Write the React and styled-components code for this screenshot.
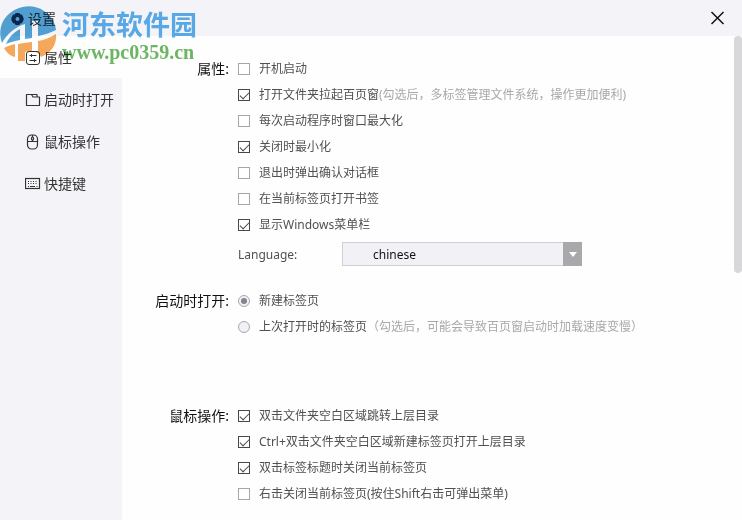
import React, { useState } from "react";
import styled, { createGlobalStyle } from "styled-components";

const GlobalStyle = createGlobalStyle`
  * {
    box-sizing: border-box;
  }
  body {
    margin: 0;
    overflow: hidden;
    background: #fefefe;
    font-family: "Noto Sans", "Noto Sans CJK SC", sans-serif;
    font-size: 12px;
    color: #505050;
  }
`;

const Window = styled.div`
  display: flex;
  flex-direction: column;
  height: 100vh;
`;

const TitleBar = styled.header`
  display: flex;
  flex: none;
  align-items: center;
  justify-content: space-between;
  height: 36px;
  padding: 0 16px 0 11px;
  background: #f4f3f7;
`;

const Title = styled.h1`
  display: flex;
  align-items: center;
  gap: 4px;
  margin: 0;
  padding-top: 2px;
  font-size: 14px;
  font-weight: 400;
  line-height: 20px;
  color: #333;
`;

const CloseButton = styled.button`
  display: flex;
  padding: 0;
  border: none;
  background: none;
  color: #111;
  cursor: pointer;
`;

const Body = styled.div`
  display: flex;
  flex: 1;
  min-height: 0;
`;

const Sidebar = styled.nav`
  flex: none;
  width: 122px;
  background: #f4f3f7;
`;

const NavItem = styled.button`
  display: flex;
  align-items: center;
  gap: 3px;
  width: 100%;
  height: 42px;
  padding: 2px 0 0 25px;
  border: none;
  background: ${(props) => (props.$active ? "#fefefe" : "transparent")};
  color: #333;
  font-family: inherit;
  font-size: 14px;
  line-height: 20px;
  white-space: nowrap;
  cursor: pointer;
`;

const Content = styled.main`
  display: flex;
  flex: 1;
  flex-direction: column;
  min-width: 0;
  padding-top: 20px;
  overflow: hidden;
`;

const Section = styled.section`
  display: grid;
  grid-template-columns: 107px 1fr;
  column-gap: 9px;
  flex: none;
  margin-bottom: ${(props) => props.$space || 0}px;
`;

const SectionTitle = styled.h2`
  margin: 0;
  font-size: 14px;
  font-weight: 400;
  line-height: 26px;
  text-align: right;
  color: #111;
`;

const Option = styled.label`
  display: flex;
  align-items: center;
  gap: 9px;
  height: 26px;
  line-height: 26px;
  white-space: nowrap;
`;

const Hint = styled.span`
  color: #a8a8a8;
`;

const Checkbox = styled.input.attrs({ type: "checkbox" })`
  appearance: none;
  display: grid;
  flex: none;
  place-items: center;
  width: 12px;
  height: 12px;
  margin: 0;
  border: 1px solid #a6a6a6;
  background: #fff;

  &:checked {
    border-color: #484848;
  }
  &:checked::before {
    content: "";
    width: 8px;
    height: 4px;
    margin-bottom: 2px;
    border: solid #484848;
    border-width: 0 0 1px 1px;
    transform: rotate(-45deg);
  }
`;

const Radio = styled.input.attrs({ type: "radio" })`
  appearance: none;
  display: grid;
  flex: none;
  place-items: center;
  width: 12px;
  height: 12px;
  margin: 0;
  border: 1px solid #a9a8ae;
  border-radius: 50%;
  background: #f1f0f6;

  &:checked::before {
    content: "";
    width: 6px;
    height: 6px;
    border-radius: 50%;
    background: #85848a;
  }
`;

const LanguageRow = styled.div`
  display: flex;
  align-items: center;
  margin-top: 4px;
`;

const LanguageLabel = styled.label`
  width: 104px;
`;

const SelectBox = styled.div`
  display: flex;
  position: relative;
  width: 240px;
  height: 24px;
`;

const Select = styled.select`
  appearance: none;
  flex: 1;
  padding: 0 30px;
  border: 1px solid #cfced2;
  border-radius: 0;
  background: #f2f1f5;
  color: #111;
  font-family: inherit;
  font-size: 12px;
`;

const SelectArrow = styled.span`
  display: grid;
  position: absolute;
  top: 0;
  right: 0;
  bottom: 0;
  place-items: center;
  width: 19px;
  background: #a9a8ab;
  pointer-events: none;
`;

const ScrollTrack = styled.div`
  flex: none;
  width: 8px;
`;

const ScrollThumb = styled.div`
  height: 49%;
  border-radius: 4px;
  background: #d8d7da;
`;

const Watermark = styled.div`
  display: flex;
  position: absolute;
  top: 6px;
  left: 0;
  gap: 4px;
  mix-blend-mode: multiply;
  pointer-events: none;
`;

const WatermarkText = styled.div`
  display: flex;
  flex-direction: column;
  padding-top: 4px;
  white-space: nowrap;
`;

const SiteName = styled.span`
  font-size: 27px;
  font-weight: 700;
  line-height: 30px;
  color: #5cb0ee;
`;

const SiteUrl = styled.span`
  font-family: "Liberation Serif", serif;
  font-size: 20px;
  font-weight: 700;
  line-height: 24px;
  color: #6bb763;
`;

const GearIcon = () => (
  <svg width="13" height="14" viewBox="0 0 13 14">
    <path
      fill="#1b3a5c"
      fillRule="evenodd"
      d="M4.600 1h3.800l.8 1.500 1.700.1L12.600 6v2l-1.700 3.300-1.700.1-.8 1.600H4.600l-.8-1.600-1.700-.1L.4 8V6l1.700-3.400 1.700-.1zM6.500 5a2 2 0 1 0 0 4 2 2 0 0 0 0-4z"
    />
  </svg>
);

const CloseIcon = () => (
  <svg width="17" height="17" viewBox="0 0 17 17">
    <path d="M2.500 2l12 12M14.500 2l-12 12" stroke="currentColor" strokeWidth="1.500" />
  </svg>
);

const PropertyIcon = () => (
  <svg width="16" height="16" viewBox="0 0 16 16" fill="none" stroke="currentColor">
    <rect x="1.500" y="1.500" width="13" height="13" rx="2.500" />
    <path d="M4.500 5.500h7M6.500 4v3M4.500 10.500h7M9.500 9v3" />
  </svg>
);

const FolderIcon = () => (
  <svg width="16" height="16" viewBox="0 0 16 16" fill="none" stroke="currentColor" strokeWidth="1.200">
    <path
      d="M1.500 13.500v-11h5l1.500 2.500h6.500v8.500zM6.500 2.500h5.500v2.500"
      strokeLinejoin="round"
    />
  </svg>
);

const MouseIcon = () => (
  <svg width="16" height="16" viewBox="0 0 16 16" fill="none" stroke="currentColor" strokeWidth="1.200">
    <rect x="2.500" y="1" width="10" height="14" rx="4" />
    <path d="M2.500 7.500h10M7.500 1v2M7.500 6v1.500" />
    <rect x="6.500" y="3" width="2" height="3" rx="1" />
  </svg>
);

const KeyboardIcon = () => (
  <svg width="16" height="16" viewBox="0 0 16 16" fill="none" stroke="currentColor">
    <rect x="0.500" y="2.500" width="14" height="10" strokeWidth="1.200" />
    <path d="M3 5.500h10M3 7.500h10" strokeDasharray="1 1.500" />
    <path d="M3 10.500h1M5 10.500h5M11.500 10.500h1" />
  </svg>
);

const SiteLogo = () => (
  <svg width="58" height="58" viewBox="0 0 58 58">
    <path
      fill="#55a6d8"
      d="M2 37C-2 26 1 14 10 7 20-1 34-2 44 5c7 5 11 11 12 19-6 3-12 5-18 6V15h-6v17l-7 1V18C15 21 7 28 2 37z"
    />
    <path fill="#55a6d8" d="M6 38c3-7 8-12 14-15v11c-5 1-10 2-14 4z" />
    <path fill="#f6a85c" d="M4 42c3-2 7-3 11-4v13C10 50 6 46 4 42z" />
    <path fill="#f6a85c" d="M24 37l8-1v10h6V35c7-1 13-4 18-7 1 11-5 19-15 23-3-6-9-7-16-5v9h-7V38z" />
  </svg>
);

const navItems = [
  { id: "property", text: "属性", Icon: PropertyIcon },
  { id: "startup", text: "启动时打开", Icon: FolderIcon },
  { id: "mouse", text: "鼠标操作", Icon: MouseIcon },
  { id: "shortcut", text: "快捷键", Icon: KeyboardIcon },
];

const propertyOptions = [
  { text: "开机启动", checked: false },
  {
    text: "打开文件夹拉起百页窗",
    hint: "(勾选后，多标签管理文件系统，操作更加便利)",
    checked: true,
  },
  { text: "每次启动程序时窗口最大化", checked: false },
  { text: "关闭时最小化", checked: true },
  { text: "退出时弹出确认对话框", checked: false },
  { text: "在当前标签页打开书签", checked: false },
  { text: "显示Windows菜单栏", checked: true },
];

const mouseOptions = [
  { text: "双击文件夹空白区域跳转上层目录", checked: true },
  { text: "Ctrl+双击文件夹空白区域新建标签页打开上层目录", checked: true },
  { text: "双击标签标题时关闭当前标签页", checked: true },
  { text: "右击关闭当前标签页(按住Shift右击可弹出菜单)", checked: false },
];

function CheckList({ options }) {
  return options.map((option) => (
    <Option key={option.text}>
      <Checkbox defaultChecked={option.checked} />
      <span>
        {option.text}
        {option.hint && <Hint>{option.hint}</Hint>}
      </span>
    </Option>
  ));
}

function App() {
  const [active, setActive] = useState("property");
  const [startup, setStartup] = useState("new");

  return (
    <>
      <GlobalStyle />
      <Window>
        <TitleBar>
          <Title>
            <GearIcon />
            设置
          </Title>
          <CloseButton aria-label="关闭">
            <CloseIcon />
          </CloseButton>
        </TitleBar>
        <Body>
          <Sidebar>
            {navItems.map(({ id, text, Icon }) => (
              <NavItem key={id} $active={active === id} onClick={() => setActive(id)}>
                <Icon />
                {text}
              </NavItem>
            ))}
          </Sidebar>
          <Content>
            <Section $space={22}>
              <SectionTitle>属性:</SectionTitle>
              <div>
                <CheckList options={propertyOptions} />
                <LanguageRow>
                  <LanguageLabel htmlFor="language">Language:</LanguageLabel>
                  <SelectBox>
                    <Select id="language" defaultValue="chinese">
                      <option value="chinese">chinese</option>
                      <option value="english">english</option>
                    </Select>
                    <SelectArrow>
                      <svg width="8" height="5" viewBox="0 0 8 5">
                        <path d="M0 0h8L4 5z" fill="#fff" />
                      </svg>
                    </SelectArrow>
                  </SelectBox>
                </LanguageRow>
              </div>
            </Section>
            <Section $space={63}>
              <SectionTitle>启动时打开:</SectionTitle>
              <div>
                <Option>
                  <Radio
                    name="startup"
                    checked={startup === "new"}
                    onChange={() => setStartup("new")}
                  />
                  <span>新建标签页</span>
                </Option>
                <Option>
                  <Radio
                    name="startup"
                    checked={startup === "last"}
                    onChange={() => setStartup("last")}
                  />
                  <span>
                    上次打开时的标签页
                    <Hint>（勾选后，可能会导致百页窗启动时加载速度变慢）</Hint>
                  </span>
                </Option>
              </div>
            </Section>
            <Section>
              <SectionTitle>鼠标操作:</SectionTitle>
              <div>
                <CheckList options={mouseOptions} />
              </div>
            </Section>
          </Content>
          <ScrollTrack>
            <ScrollThumb />
          </ScrollTrack>
        </Body>
      </Window>
      <Watermark>
        <SiteLogo />
        <WatermarkText>
          <SiteName>河东软件园</SiteName>
          <SiteUrl>www.pc0359.cn</SiteUrl>
        </WatermarkText>
      </Watermark>
    </>
  );
}

export default App;
